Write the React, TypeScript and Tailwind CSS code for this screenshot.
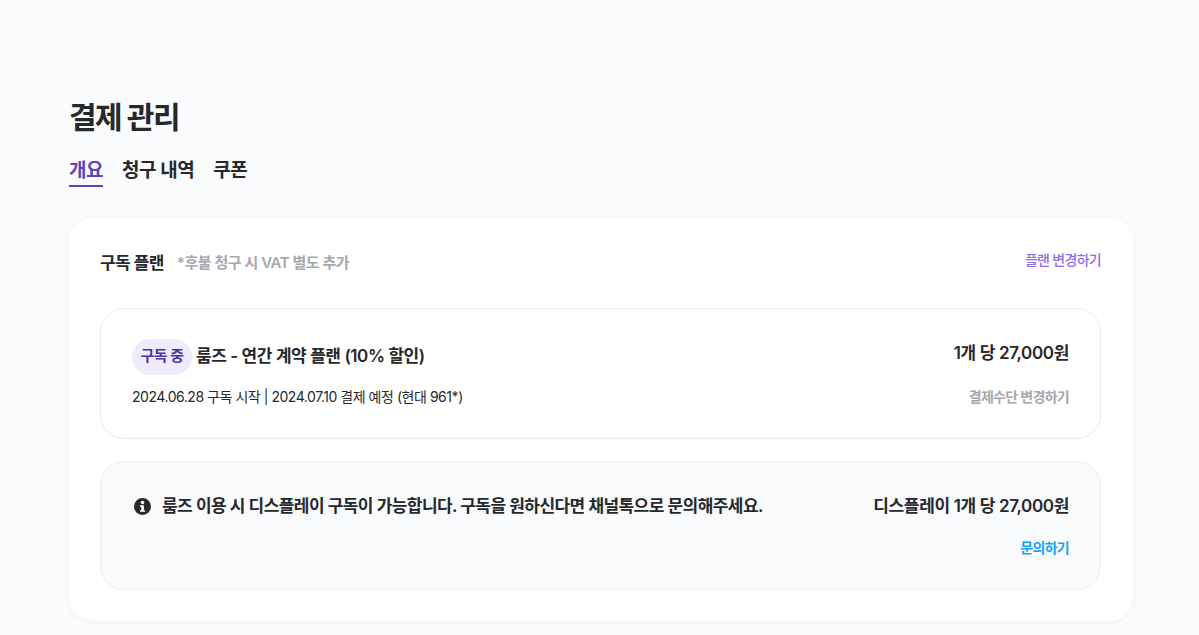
export default function App() {
  const font = { fontFamily: '"Inter", "Noto Sans CJK KR", sans-serif' };
  return (
    <div style={font} className="h-[635px] w-[1199px] overflow-hidden bg-[#fafbfd] pl-[69px] pr-[66px] pt-[98px] text-[#26282b]">
      <h1 className="h-[38px] text-[30px] font-bold leading-[38px] tracking-[-1.5px]">결제 관리</h1>
      <nav className="mt-[16px] flex h-[35px] gap-[19px] text-[19px] font-semibold tracking-[-0.5px]">
        <span className="h-[35px] border-b-2 border-[#5f43b2] leading-[37px] text-[#5f43b2]">개요</span>
        <span className="leading-[37px]">청구 내역</span>
        <span className="leading-[37px]">쿠폰</span>
      </nav>
      <section className="mt-[31px] h-[403px] rounded-[24px] bg-white pl-[31px] pr-[32px] pt-[31px] shadow-[0_1px_6px_rgba(30,40,70,0.05)]">
        <div className="flex h-[28px] items-start justify-between">
          <div className="flex items-center gap-[13px]">
            <span className="text-[17px] font-semibold leading-[26px] tracking-[-0.6px]">구독 플랜</span>
            <span className="text-[15px] font-semibold leading-[28px] tracking-[-0.45px] text-[#a5a8ad]">*후불 청구 시 VAT 별도 추가</span>
          </div>
          <span className="text-[14px] font-medium leading-[22px] tracking-[-0.7px] text-[#8b6ee8]">플랜 변경하기</span>
        </div>
        <div className="mt-[31px] flex h-[131px] justify-between rounded-[24px] border border-[#e9ebee] bg-white px-[31px] pt-[30px]">
          <div>
            <div className="flex items-center gap-[4px]">
              <span className="flex h-[36px] w-[60px] items-center justify-center rounded-[18px] bg-[#f0ebfc] pb-[2px] text-[15px] font-semibold leading-[20px] tracking-[-0.5px] text-[#4b3596]">구독 중</span>
              <span className="pb-[2px] text-[17px] font-semibold leading-[24px] tracking-[-0.43px]">룸즈 - 연간 계약 플랜 (10% 할인)</span>
            </div>
            <p className="mt-[12px] text-[14px] leading-[20px] tracking-[-0.46px]">2024.06.28 구독 시작 | 2024.07.10 결제 예정 (현대 961*)</p>
          </div>
          <div className="flex flex-col items-end">
            <span className="text-[17px] font-semibold leading-[28px] tracking-[-0.35px]">1개 당 27,000원</span>
            <span className="mt-[20px] text-[14px] font-semibold leading-[20px] tracking-[-0.7px] text-[#a5a8ad]">결제수단 변경하기</span>
          </div>
        </div>
        <div className="mt-[22px] flex h-[129px] justify-between rounded-[24px] border border-[#edeff2] bg-[#f9fafc] px-[31px] pt-[30px]">
          <div className="flex h-[28px] items-center gap-[11px] pl-[2px]">
            <svg width="17" height="17" viewBox="0 0 16 16">
              <circle cx="8" cy="8" r="8" fill="#26282b" />
              <circle cx="8" cy="4.2" r="1.7" fill="#fff" />
              <path d="M5.6 6.8h3.7v4.7h1.1V13H5.6v-1.5h1.2V8.3H5.6z" fill="#fff" />
            </svg>
            <span className="text-[17px] font-semibold leading-[30px] tracking-[-0.56px]">룸즈 이용 시 디스플레이 구독이 가능합니다. 구독을 원하신다면 채널톡으로 문의해주세요.</span>
          </div>
          <div className="flex flex-col items-end">
            <span className="text-[17px] font-semibold leading-[28px] tracking-[-0.35px]">디스플레이 1개 당 27,000원</span>
            <span className="mt-[18px] text-[14px] font-semibold leading-[20px] tracking-[-0.7px] text-[#12a5f5]">문의하기</span>
          </div>
        </div>
      </section>
    </div>
  );
}
